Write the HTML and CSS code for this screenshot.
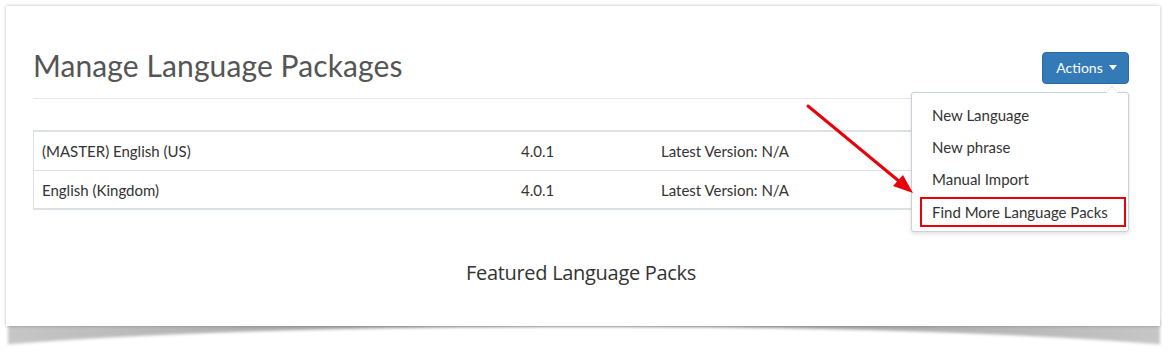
FILE: index.html
```html
<!DOCTYPE html>
<html>
<head>
<meta charset="utf-8">
<link rel="stylesheet" href="styles.css">
</head>
<body>
<div class="stage">
  <div class="card">
    <div class="header">
      <h1 class="title">Manage Language Packages</h1>
      <div class="actions">
        <button class="btn">Actions <span class="caret"></span></button>
        <div class="dropdown">
          <div class="item">New Language</div>
          <div class="item">New phrase</div>
          <div class="item">Manual Import</div>
          <div class="item highlight">Find More Language Packs</div>
        </div>
      </div>
    </div>
    <div class="table">
      <div class="row">
        <div class="cell">(MASTER) English (US)</div>
        <div class="cell">4.0.1</div>
        <div class="cell">Latest Version: N/A</div>
      </div>
      <div class="row">
        <div class="cell">English (Kingdom)</div>
        <div class="cell">4.0.1</div>
        <div class="cell">Latest Version: N/A</div>
      </div>
    </div>
    <h2 class="featured">Featured Language Packs</h2>
  </div>
  <div class="lift"></div>
  <svg class="arrow" width="1172" height="355" viewBox="0 0 1172 355">
    <line x1="808" y1="106" x2="900" y2="182" stroke="#e8000b" stroke-width="3" stroke-linecap="round"/>
    <polygon points="913,193 893,186 903,175" fill="#e8000b"/>
  </svg>
</div>
</body>
</html>
```
FILE: styles.css
```css
* { box-sizing: border-box; }
html, body { margin: 0; padding: 0; background: #fff; }
body { font-family: "Lato", "Open Sans", sans-serif; color: #333; }

.stage {
  position: relative;
  width: 1172px;
  height: 355px;
  padding: 6px 0 0 6px;
}

.card {
  position: relative;
  z-index: 2;
  width: 1154px;
  height: 320px;
  background: #fff;
  box-shadow: 0 0 3px rgba(0,0,0,0.28);
  padding: 46px 31px 0 27px;
}

.header {
  display: flex;
  justify-content: space-between;
  align-items: center;
  height: 47px;
  padding-bottom: 15px;
  border-bottom: 1px solid #e5e5e5;
}

.title {
  margin: 0 0 6px;
  font-family: "Lato", sans-serif;
  font-weight: 400;
  font-size: 30px;
  line-height: 32px;
  color: #555;
  letter-spacing: 0.1px;
}

.actions { position: relative; }

.btn {
  display: flex;
  align-items: center;
  gap: 6px;
  height: 32px;
  width: 87px;
  justify-content: center;
  background: #337ab7;
  border: 1px solid #2e6da4;
  border-radius: 4px;
  color: #fff;
  font-family: "Lato", sans-serif;
  font-size: 14px;
  padding: 0 0 0 2px;
}

.caret {
  width: 0; height: 0;
  border-left: 4.5px solid transparent;
  border-right: 4.5px solid transparent;
  border-top: 5px solid #fff;
}

.dropdown {
  position: absolute;
  z-index: 5;
  right: 0;
  top: 40px;
  width: 218px;
  background: #fff;
  border: 1px solid #c9d1d8;
  border-radius: 3px;
  box-shadow: 0 2px 4px rgba(0,0,0,0.12);
  padding: 6px 0 4px;
}
.dropdown::before,
.dropdown::after {
  content: "";
  position: absolute;
  right: 10px;
  width: 0; height: 0;
  border-left: 6px solid transparent;
  border-right: 6px solid transparent;
}
.dropdown::before { top: -7px; border-bottom: 7px solid #c9d1d8; }
.dropdown::after { top: -6px; border-bottom: 6px solid #fff; }

.item {
  height: 32px;
  line-height: 32px;
  padding-left: 20px;
  font-size: 15px;
  color: #333;
  white-space: nowrap;
}
.item.highlight {
  height: 30px;
  line-height: 26px;
  margin: 2px 2px 0 8px;
  padding-left: 10px;
  border: 2px solid #e8000b;
}

.table {
  margin-top: 31px;
  border: 1px solid #dde1e5;
  border-top-width: 2px;
  border-bottom-width: 2px;
}
.row {
  display: grid;
  grid-template-columns: 479px 140px 1fr;
  height: 38px;
  align-items: center;
}
.row + .row { border-top: 1px solid #dde1e5; height: 38px; }
.cell {
  padding-left: 8px;
  font-size: 15px;
  color: #333;
}

.featured {
  margin: 49px 0 0;
  text-align: center;
  font-family: "Open Sans", sans-serif;
  font-weight: 400;
  font-size: 20px;
  letter-spacing: -0.3px;
  color: #333;
}

.lift {
  position: absolute;
  z-index: 1;
  left: 8px;
  top: 320px;
  width: 1152px;
  height: 30px;
  background:
    radial-gradient(ellipse 720px 44px at 50% 50px, #fff 98%, rgba(255,255,255,0) 100%),
    linear-gradient(to right, #c6c6c6, #8e8e8e 50%, #c6c6c6);
  filter: blur(1.5px);
}

.arrow {
  position: absolute;
  left: 0; top: 0;
  z-index: 10;
  pointer-events: none;
}
```
